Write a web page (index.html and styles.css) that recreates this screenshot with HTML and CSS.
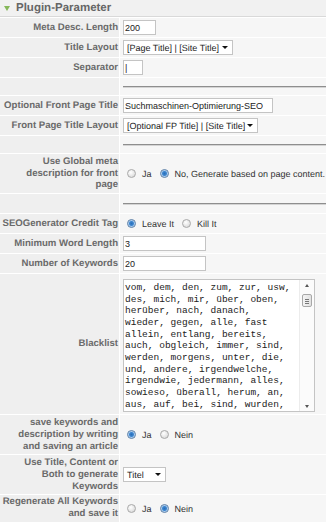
FILE: index.html
```html
<!DOCTYPE html>
<html lang="de">
<head>
  <meta charset="UTF-8" />
  <title>Plugin-Parameter</title>
  <meta name="viewport" content="width=device-width, initial-scale=1.0" />
  <link rel="stylesheet" href="styles.css">
</head>
<body>
  <div class="panel">
    <div class="panel-head"><span class="toggle"></span>Plugin-Parameter</div>

    <div class="params">
      <div class="label">Meta Desc. Length</div>
      <div class="field"><input class="text w-meta" type="text" value="200"></div>

      <div class="label">Title Layout</div>
      <div class="field">
        <div class="select w-title"><span>[Page Title] | [Site Title]</span><i class="caret"></i></div>
      </div>

      <div class="label">Separator</div>
      <div class="field"><input class="text w-sep" type="text" value="|"></div>

      <div class="label sep-row"></div>
      <div class="field sep-row"><div class="rule"></div></div>

      <div class="label">Optional Front Page Title</div>
      <div class="field"><input class="text w-fptitle" type="text" value="Suchmaschinen-Optimierung-SEO"></div>

      <div class="label">Front Page Title Layout</div>
      <div class="field">
        <div class="select w-fplayout"><span>[Optional FP Title] | [Site Title]</span><i class="caret"></i></div>
      </div>

      <div class="label sep-row"></div>
      <div class="field sep-row"><div class="rule"></div></div>

      <div class="label tall">Use Global meta<br>description for front<br>page</div>
      <div class="field">
        <label class="choice"><input class="radio" type="radio" name="global"> Ja</label>
        <label class="choice"><input class="radio" type="radio" name="global" checked> No, Generate based on page content.</label>
      </div>

      <div class="label sep-row wide"></div>
      <div class="field sep-row wide"><div class="rule"></div></div>

      <div class="label">SEOGenerator Credit Tag</div>
      <div class="field">
        <label class="choice"><input class="radio" type="radio" name="credit" checked> Leave It</label>
        <label class="choice"><input class="radio" type="radio" name="credit"> Kill It</label>
      </div>

      <div class="label">Minimum Word Length</div>
      <div class="field"><input class="text w-num" type="text" value="3"></div>

      <div class="label">Number of Keywords</div>
      <div class="field"><input class="text w-num" type="text" value="20"></div>

      <div class="label">Blacklist</div>
      <div class="field top">
        <div class="textbox">
          <textarea class="words" readonly>vom, dem, den, zum, zur, usw,
des, mich, mir, über, oben,
herüber, nach, danach,
wieder, gegen, alle, fast
allein, entlang, bereits,
auch, obgleich, immer, sind,
werden, morgens, unter, die,
und, andere, irgendwelche,
irgendwie, jedermann, alles,
sowieso, überall, herum, an,
aus, auf, bei, sind, wurden,</textarea>
          <div class="scrollbar">
            <i class="arrow up"></i>
            <span class="thumb"></span>
            <i class="arrow down"></i>
          </div>
        </div>
      </div>

      <div class="label tall">save keywords and<br>description by writing<br>and saving an article</div>
      <div class="field">
        <label class="choice"><input class="radio" type="radio" name="save" checked> Ja</label>
        <label class="choice"><input class="radio" type="radio" name="save"> Nein</label>
      </div>

      <div class="label tall">Use Title, Content or<br>Both to generate<br>Keywords</div>
      <div class="field">
        <div class="select w-titel"><span>Titel</span><i class="caret"></i></div>
      </div>

      <div class="label last">Regenerate All Keywords<br>and save it</div>
      <div class="field">
        <label class="choice"><input class="radio" type="radio" name="regen"> Ja</label>
        <label class="choice"><input class="radio" type="radio" name="regen" checked> Nein</label>
      </div>
    </div>
  </div>
</body>
</html>
```

FILE: styles.css
```css
* {
  box-sizing: border-box;
}

body {
  margin: 0;
  height: 100vh;
  overflow: hidden;
  background: #f6f6f6;
  color: #333;
  font-family: 'Liberation Sans', Arial, Helvetica, sans-serif;
  font-size: 9px;
  text-rendering: geometricPrecision;
}

.panel-head {
  display: flex;
  align-items: center;
  gap: 6px;
  height: 17px;
  padding-left: 4px;
  background: #f1f1f1;
  border-bottom: 1px solid #d9d9d9;
  color: #666;
  font-size: 11.5px;
  font-weight: bold;
}

.toggle {
  width: 0;
  height: 0;
  border-left: 3px solid transparent;
  border-right: 3px solid transparent;
  border-top: 5px solid #86b85a;
}

.params {
  display: grid;
  grid-template-columns: 119px 1fr;
  gap: 1px;
  padding-top: 1px;
  background: #fff;
}

.label {
  display: flex;
  align-items: center;
  justify-content: flex-end;
  min-height: 19px;
  padding: 2px 1px 2px 0;
  background: #efefef;
  color: #6a6a6a;
  font-size: 9.6px;
  font-weight: bold;
  line-height: 11.7px;
  text-align: right;
  white-space: nowrap;
}

.field {
  display: flex;
  align-items: center;
  min-height: 19px;
  padding-left: 3px;
  background: #f6f6f6;
}

.field.top {
  align-items: flex-start;
  padding-top: 5px;
  padding-bottom: 2px;
}

.sep-row {
  min-height: 17px;
  height: 17px;
}

.sep-row.wide {
  height: 19px;
}

.label.tall {
  min-height: 39px;
}

.label.last {
  align-items: flex-start;
  padding-top: 1px;
}

.rule {
  flex: 1;
  border-top: 1px solid #8e8e8e;
  border-bottom: 1px solid #d4d4d4;
}

.text {
  height: 15px;
  margin: 0;
  padding: 0 1px;
  background: #fff;
  border: 1px solid #c4c4c4;
  border-radius: 0;
  color: #222;
  font-family: inherit;
  font-size: 9px;
}

.w-meta { width: 33px; }
.w-sep { width: 20px; }
.w-fptitle { width: 150px; }
.w-num { width: 83px; }

.select {
  display: flex;
  align-items: center;
  justify-content: space-between;
  height: 15px;
  padding: 0 4px 0 3px;
  background: #fff;
  border: 1px solid #c4c4c4;
  color: #222;
  white-space: nowrap;
}

.w-title { width: 110px; }
.w-fplayout { width: 135px; }
.w-titel { width: 43px; }

.caret {
  width: 0;
  height: 0;
  border-left: 3px solid transparent;
  border-right: 3px solid transparent;
  border-top: 3px solid #111;
}

.choice {
  display: flex;
  align-items: center;
  gap: 6px;
  margin-left: 4px;
  margin-right: 4px;
  color: #333;
  white-space: nowrap;
}

.radio {
  appearance: none;
  width: 9px;
  height: 9px;
  margin: 0;
  border: 1px solid #a9a9a9;
  border-radius: 50%;
  background: radial-gradient(circle at 40% 35%, #fff 0, #e4e4e4 60%, #cfcfcf 100%);
}

.radio:checked {
  border-color: #5a7ea6;
  background: radial-gradient(circle, #2a6fb8 0, #3d86d0 2px, #a9cbee 3px, #e2edf8 4px);
}

.textbox {
  display: flex;
  width: 192px;
  height: 133px;
  background: #fff;
  border: 1px solid #c4c4c4;
}

.words {
  flex: 1;
  height: 100%;
  margin: 0;
  padding: 2px 0 0 1px;
  border: none;
  outline: none;
  resize: none;
  overflow: hidden;
  color: #222;
  font-family: 'Liberation Mono', 'Courier New', monospace;
  font-size: 9.5px;
  line-height: 11.67px;
  white-space: pre;
}

.scrollbar {
  display: flex;
  flex-direction: column;
  align-items: center;
  width: 15px;
  padding: 4px 0 3px;
  background: #fbfbfb;
  border-left: 1px solid #ececec;
}

.arrow {
  width: 0;
  height: 0;
  border-left: 2.5px solid transparent;
  border-right: 2.5px solid transparent;
}

.arrow.up {
  border-bottom: 3px solid #555;
}

.arrow.down {
  margin-top: auto;
  border-top: 3px solid #555;
}

.thumb {
  width: 10px;
  height: 13px;
  margin-top: 7px;
  background:
    linear-gradient(#777, #777) center 4px / 4px 1px no-repeat,
    linear-gradient(#777, #777) center 6px / 4px 1px no-repeat,
    linear-gradient(#777, #777) center 8px / 4px 1px no-repeat,
    linear-gradient(to right, #f4f4f4, #e2e2e2);
  border: 1px solid #a8a8a8;
  border-radius: 2px;
}
```
